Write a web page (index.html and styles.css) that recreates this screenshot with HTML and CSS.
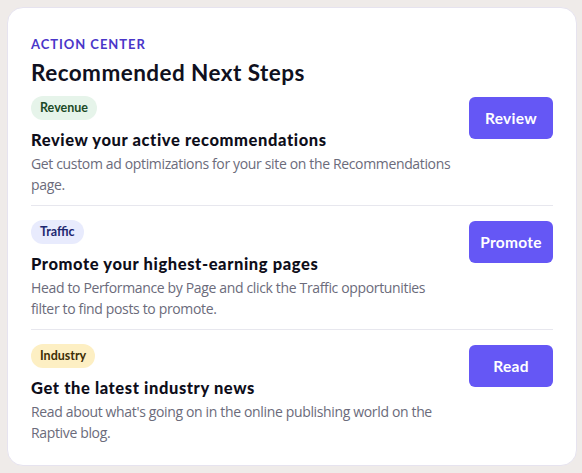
FILE: index.html
```html
<!DOCTYPE html>
<html>
<head>
<meta charset="utf-8">
<link rel="stylesheet" href="styles.css">
</head>
<body>
<div class="card">
  <div class="eyebrow">ACTION CENTER</div>
  <h1 class="title">Recommended Next Steps</h1>
  <div class="list">
    <div class="item">
      <div class="item-main">
        <span class="badge badge-revenue">Revenue</span>
        <h2 class="item-title">Review your active recommendations</h2>
        <p class="item-desc">Get custom ad optimizations for your site on the Recommendations page.</p>
      </div>
      <button class="btn">Review</button>
    </div>
    <div class="item">
      <div class="item-main">
        <span class="badge badge-traffic">Traffic</span>
        <h2 class="item-title">Promote your highest-earning pages</h2>
        <p class="item-desc">Head to Performance by Page and click the Traffic opportunities filter to find posts to promote.</p>
      </div>
      <button class="btn">Promote</button>
    </div>
    <div class="item">
      <div class="item-main">
        <span class="badge badge-industry">Industry</span>
        <h2 class="item-title">Get the latest industry news</h2>
        <p class="item-desc">Read about what's going on in the online publishing world on the Raptive blog.</p>
      </div>
      <button class="btn">Read</button>
    </div>
  </div>
</div>
</body>
</html>
```
FILE: styles.css
```css
* { box-sizing: border-box; }
html, body { margin: 0; padding: 0; }
body {
  background: #efebe9;
  padding: 7px 5px 7px 7px;
  font-family: Lato, "Liberation Sans", sans-serif;
}
.card {
  background: #ffffff;
  border: 1px solid #e6e3ef;
  border-radius: 16px;
  padding: 28px 23px 22px 23px;
  height: 459px;
}
.eyebrow {
  color: #4a36c9;
  font-size: 13px;
  font-weight: 700;
  letter-spacing: 0.95px;
  line-height: 16px;
}
.title {
  margin: 6px 0 0 0;
  font-size: 22.5px;
  font-weight: 700;
  letter-spacing: 0.45px;
  color: #0f1020;
  line-height: 30px;
}
.list { display: flex; flex-direction: column; }
.item {
  display: flex;
  justify-content: space-between;
  align-items: flex-start;
  gap: 10px;
  padding: 14px 0 10px 0;
  border-bottom: 1px solid #e7e7ee;
}
.item:first-child { padding-top: 8px; }
.item:last-child { border-bottom: none; padding-bottom: 0; }
.item-main { flex: 1; min-width: 0; }
.badge {
  display: inline-block;
  font-size: 12.5px;
  font-weight: 700;
  line-height: 24px;
  height: 24px;
  padding: 0 9px;
  border-radius: 12px;
}
.badge-revenue { background: #e6f4ea; color: #1c4a27; }
.badge-traffic { background: #e8ebfd; color: #1d2770; }
.badge-industry { background: #fdefc3; color: #3f2e05; }
.item-title {
  margin: 10px 0 0 0;
  font-size: 16.5px;
  font-weight: 900;
  letter-spacing: 0.6px;
  color: #0e0e1a;
  line-height: 21px;
}
.item-desc {
  margin: 2px 0 0 0;
  max-width: 422px;
  font-family: "Open Sans", "Noto Sans", sans-serif;
  font-size: 14px;
  letter-spacing: -0.35px;
  color: #6b6b7b;
  line-height: 21px;
}
.btn {
  flex: none;
  width: 84px;
  height: 42px;
  margin-top: 1px;
  border: none;
  border-radius: 6px;
  background: #6557f5;
  color: #ffffff;
  font-family: Lato, "Liberation Sans", sans-serif;
  font-size: 15.5px;
  font-weight: 700;
  letter-spacing: 0.3px;
  cursor: pointer;
}
```
